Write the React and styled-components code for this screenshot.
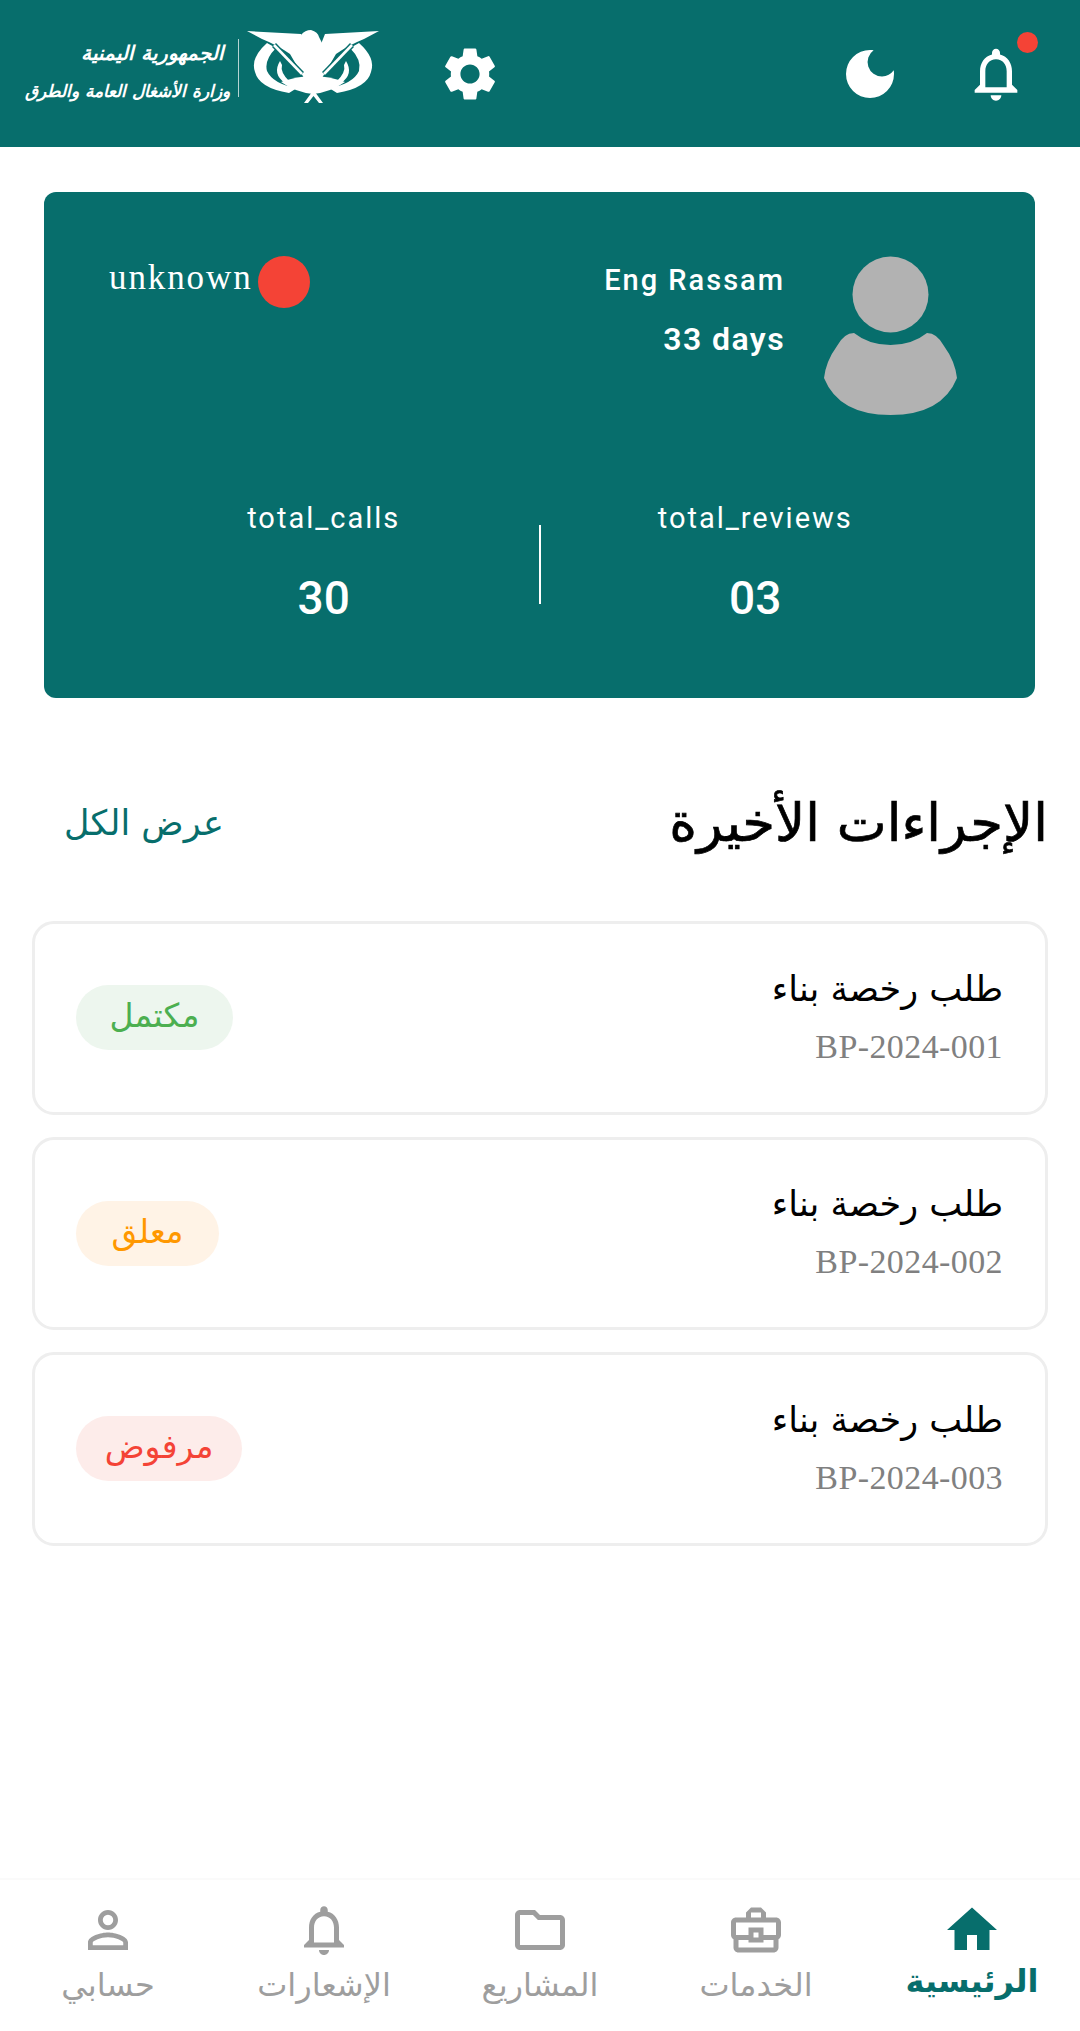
import React from 'react'
import styled, { createGlobalStyle } from 'styled-components'
import {
  MdNotificationsNone,
  MdDarkMode,
  MdSettings,
  MdHome,
  MdOutlineBusinessCenter,
  MdOutlineFolder,
  MdPersonOutline,
} from 'react-icons/md'

const TEAL = '#076e6c'
const ARABIC = '"DejaVu Sans", "Noto Sans", sans-serif'

const GlobalStyle = createGlobalStyle`
  html, body {
    margin: 0;
    padding: 0;
    background: #fff;
  }
  body {
    font-family: Roboto, sans-serif;
  }
  * {
    box-sizing: border-box;
  }
`

const Page = styled.div`
  width: 1080px;
  height: 2031px;
  display: flex;
  flex-direction: column;
  background: #fff;
`

const Header = styled.header`
  height: 147px;
  flex: none;
  background: ${TEAL};
  display: flex;
  align-items: center;
  padding: 0 52px 0 27px;
`

const Logo = styled.div`
  display: flex;
  align-items: center;
  gap: 8px;
  height: 100%;
  padding-bottom: 11px;
`

const LogoText = styled.div`
  width: 203px;
  padding-top: 6px;
  display: flex;
  flex-direction: column;
  align-items: flex-start;
  color: #fff;
  font-family: "DejaVu Serif", ${ARABIC};
  font-style: italic;
  line-height: 1;
`

const LogoLine = styled.span`
  font-size: ${p => p.$size}px;
  line-height: ${p => p.$height}px;
  padding-inline-start: ${p => p.$inset || 0}px;
  font-weight: 700;
  white-space: nowrap;
`

const LogoRule = styled.div`
  width: 1px;
  height: 58px;
  background: rgba(255, 255, 255, 0.7);
`

const GearWrap = styled.div`
  margin-left: 57px;
  display: flex;
  color: #fff;
`

const HeaderEnd = styled.div`
  margin-left: auto;
  display: flex;
  align-items: center;
  gap: 62px;
  color: #fff;
`

const BellWrap = styled.div`
  position: relative;
  display: flex;
`

const BellDot = styled.span`
  position: absolute;
  top: -10px;
  right: -10px;
  width: 21px;
  height: 21px;
  border-radius: 50%;
  background: #f44336;
`

const Main = styled.main`
  flex: 1;
  padding: 45px 32px 0;
`

const ProfileCard = styled.section`
  margin: 0 13px 0 12px;
  height: 506px;
  background: ${TEAL};
  border-radius: 12px;
  color: #fff;
  padding: 64px 78px 0 65px;
  display: flex;
  flex-direction: column;
`

const ProfileTop = styled.div`
  display: flex;
  justify-content: space-between;
  align-items: flex-start;
`

const Status = styled.div`
  display: flex;
  align-items: center;
  gap: 5px;
`

const StatusText = styled.span`
  font-family: "Liberation Serif", serif;
  font-size: 35px;
  letter-spacing: 1.9px;
  margin-bottom: 8px;
`

const StatusDot = styled.span`
  width: 52px;
  height: 52px;
  border-radius: 50%;
  background: #f44336;
`

const Person = styled.div`
  display: flex;
  align-items: flex-start;
  gap: 39px;
`

const PersonText = styled.div`
  display: flex;
  flex-direction: column;
  align-items: flex-end;
  gap: 25px;
  padding-top: 7px;
`

const PersonName = styled.span`
  font-size: ${p => (p.$bold ? 32 : 29)}px;
  line-height: 34px;
  font-weight: ${p => (p.$bold ? 600 : 500)};
  letter-spacing: ${p => (p.$bold ? 1.4 : 2)}px;
`

const Stats = styled.div`
  margin-top: 86px;
  margin-right: -13px;
  display: flex;
  align-items: center;
`

const Stat = styled.div`
  flex: 1;
  display: flex;
  flex-direction: column;
  align-items: center;
  gap: 36px;
`

const StatLabel = styled.span`
  font-size: 29px;
  line-height: 34px;
  letter-spacing: 2px;
`

const StatValue = styled.span`
  font-size: 46px;
  line-height: 54px;
  font-weight: 500;
`

const StatDivider = styled.div`
  width: 2px;
  height: 79px;
  background: #fff;
  margin-top: 3px;
`

const SectionHead = styled.div`
  direction: rtl;
  margin-top: 87px;
  padding-left: 32px;
  display: flex;
  justify-content: space-between;
  align-items: center;
`

const SectionTitle = styled.h2`
  margin: 0;
  font-family: ${ARABIC};
  font-size: 53px;
  line-height: 76px;
  font-weight: 400;
  -webkit-text-stroke: 0.7px #000;
  color: #000;
`

const ViewAll = styled.span`
  font-family: ${ARABIC};
  font-size: 35px;
  color: ${TEAL};
`

const List = styled.div`
  margin-top: 60px;
  display: flex;
  flex-direction: column;
  gap: 22px;
`

const ActionCard = styled.article`
  direction: rtl;
  height: 193.5px;
  border: 3px solid #eeeeee;
  border-radius: 22px;
  background: #fff;
  padding: 0 42px 0 41px;
  display: flex;
  justify-content: space-between;
  align-items: center;
`

const ActionInfo = styled.div`
  display: flex;
  flex-direction: column;
  gap: 21px;
  padding-bottom: 5px;
`

const ActionTitle = styled.span`
  font-family: ${ARABIC};
  font-size: 35px;
  line-height: 42px;
  color: #000;
`

const ActionCode = styled.span`
  direction: ltr;
  text-align: right;
  font-family: "Liberation Serif", serif;
  font-size: 34px;
  line-height: 32px;
  letter-spacing: 0.4px;
  color: #808080;
`

const Badge = styled.span`
  font-family: ${ARABIC};
  height: 65px;
  min-width: ${p => p.$width}px;
  border-radius: 33px;
  background: ${p => p.$bg};
  color: ${p => p.$color};
  font-size: 33px;
  display: flex;
  align-items: center;
  justify-content: center;
  padding-bottom: 4px;
`

const BottomNav = styled.nav`
  direction: rtl;
  height: 153px;
  flex: none;
  border-top: 2px solid #fafafa;
  display: grid;
  grid-template-columns: repeat(5, 1fr);
`

const NavItem = styled.div`
  display: flex;
  flex-direction: column;
  align-items: center;
  padding-top: 20px;
  color: ${p => (p.$active ? TEAL : '#9e9e9e')};
`

const NavLabel = styled.span`
  font-family: ${ARABIC};
  font-size: 32px;
  font-weight: ${p => (p.$active ? 700 : 400)};
  line-height: 40px;
  margin-top: ${p => (p.$active ? 1 : 5)}px;
  white-space: nowrap;
`

function EmblemHalf({ flip }) {
  return (
    <g transform={flip ? 'translate(132 0) scale(-1 1)' : undefined}>
      <path d="M0 1 L54 4 L58 14 L66 14 L66 52 L57 48 L43 24 Q30 15 15 9 Z" />
      <path d="M20 13 Q3 28 8 42 Q12 58 42 63 L50 58 Q26 54 20 41 Q17 30 29 18 Z" />
      <path d="M33 31 Q25 44 38 53 L42 51 Q33 42 35 35 Z" />
      <path d="M34 52 Q50 46 66 46 L66 64 Q48 62 34 52 Z" />
      <path d="M27 15 L55 44" stroke={TEAL} strokeWidth="5.5" fill="none" />
      <path d="M27 15 L55 44" stroke="#fff" strokeWidth="2.6" fill="none" />
    </g>
  )
}

function Emblem() {
  return (
    <svg width="134" height="76" viewBox="0 0 134 76" fill="#fff">
      <EmblemHalf />
      <EmblemHalf flip />
      {/* head */}
      <path d="M54 5 Q58 0 64 0 Q71 2 72 7 L76 15 L76 26 L56 26 Z" />
      <path d="M57 73 L65 62 L68 62 L76 73 L72 73 L66.5 66 L61 73 Z" />
    </svg>
  )
}

function Avatar() {
  return (
    <svg width="133" height="159" viewBox="0 0 133 159" fill="#b2b2b2">
      <circle cx="66.5" cy="38.5" r="38" />
      <path d="M30 77 Q45 89 66.5 89 Q88 89 103 77 Q113 77 120 90 Q131 105 133 122 Q118 159 66.5 159 Q15 159 0 122 Q2 105 13 90 Q20 77 30 77 Z" />
    </svg>
  )
}

const ACTIONS = [
  { code: 'BP-2024-001', status: 'مكتمل', width: 157, bg: '#edf6ee', color: '#4caf50' },
  { code: 'BP-2024-002', status: 'معلق', width: 143, bg: '#fff3e6', color: '#ff9800' },
  { code: 'BP-2024-003', status: 'مرفوض', width: 166, bg: '#fdecea', color: '#f44336' },
]

const NAV = [
  { label: 'الرئيسية', Icon: MdHome, active: true },
  { label: 'الخدمات', Icon: MdOutlineBusinessCenter },
  { label: 'المشاريع', Icon: MdOutlineFolder },
  { label: 'الإشعارات', Icon: MdNotificationsNone },
  { label: 'حسابي', Icon: MdPersonOutline },
]

export default function App() {
  return (
    <Page>
      <GlobalStyle />
      <Header>
        <Logo>
          <LogoText dir="rtl">
            <LogoLine $size={20} $height={40} $inset={6}>الجمهورية اليمنية</LogoLine>
            <LogoLine $size={17} $height={36}>وزارة الأشغال العامة والطرق</LogoLine>
          </LogoText>
          <LogoRule />
          <Emblem />
        </Logo>
        <GearWrap>
          <MdSettings size={64} />
        </GearWrap>
        <HeaderEnd>
          <MdDarkMode size={64} />
          <BellWrap>
            <MdNotificationsNone size={64} />
            <BellDot />
          </BellWrap>
        </HeaderEnd>
      </Header>
      <Main>
        <ProfileCard>
          <ProfileTop>
            <Status>
              <StatusText>unknown</StatusText>
              <StatusDot />
            </Status>
            <Person>
              <PersonText>
                <PersonName>Eng Rassam</PersonName>
                <PersonName $bold>33 days</PersonName>
              </PersonText>
              <Avatar />
            </Person>
          </ProfileTop>
          <Stats>
            <Stat>
              <StatLabel>total_calls</StatLabel>
              <StatValue>30</StatValue>
            </Stat>
            <StatDivider />
            <Stat>
              <StatLabel>total_reviews</StatLabel>
              <StatValue>03</StatValue>
            </Stat>
          </Stats>
        </ProfileCard>
        <SectionHead>
          <SectionTitle>الإجراءات الأخيرة</SectionTitle>
          <ViewAll>عرض الكل</ViewAll>
        </SectionHead>
        <List>
          {ACTIONS.map(a => (
            <ActionCard key={a.code}>
              <ActionInfo>
                <ActionTitle>طلب رخصة بناء</ActionTitle>
                <ActionCode>{a.code}</ActionCode>
              </ActionInfo>
              <Badge $width={a.width} $bg={a.bg} $color={a.color}>{a.status}</Badge>
            </ActionCard>
          ))}
        </List>
      </Main>
      <BottomNav>
        {NAV.map(({ label, Icon, active }) => (
          <NavItem key={label} $active={active}>
            <Icon size={60} />
            <NavLabel $active={active}>{label}</NavLabel>
          </NavItem>
        ))}
      </BottomNav>
    </Page>
  )
}
